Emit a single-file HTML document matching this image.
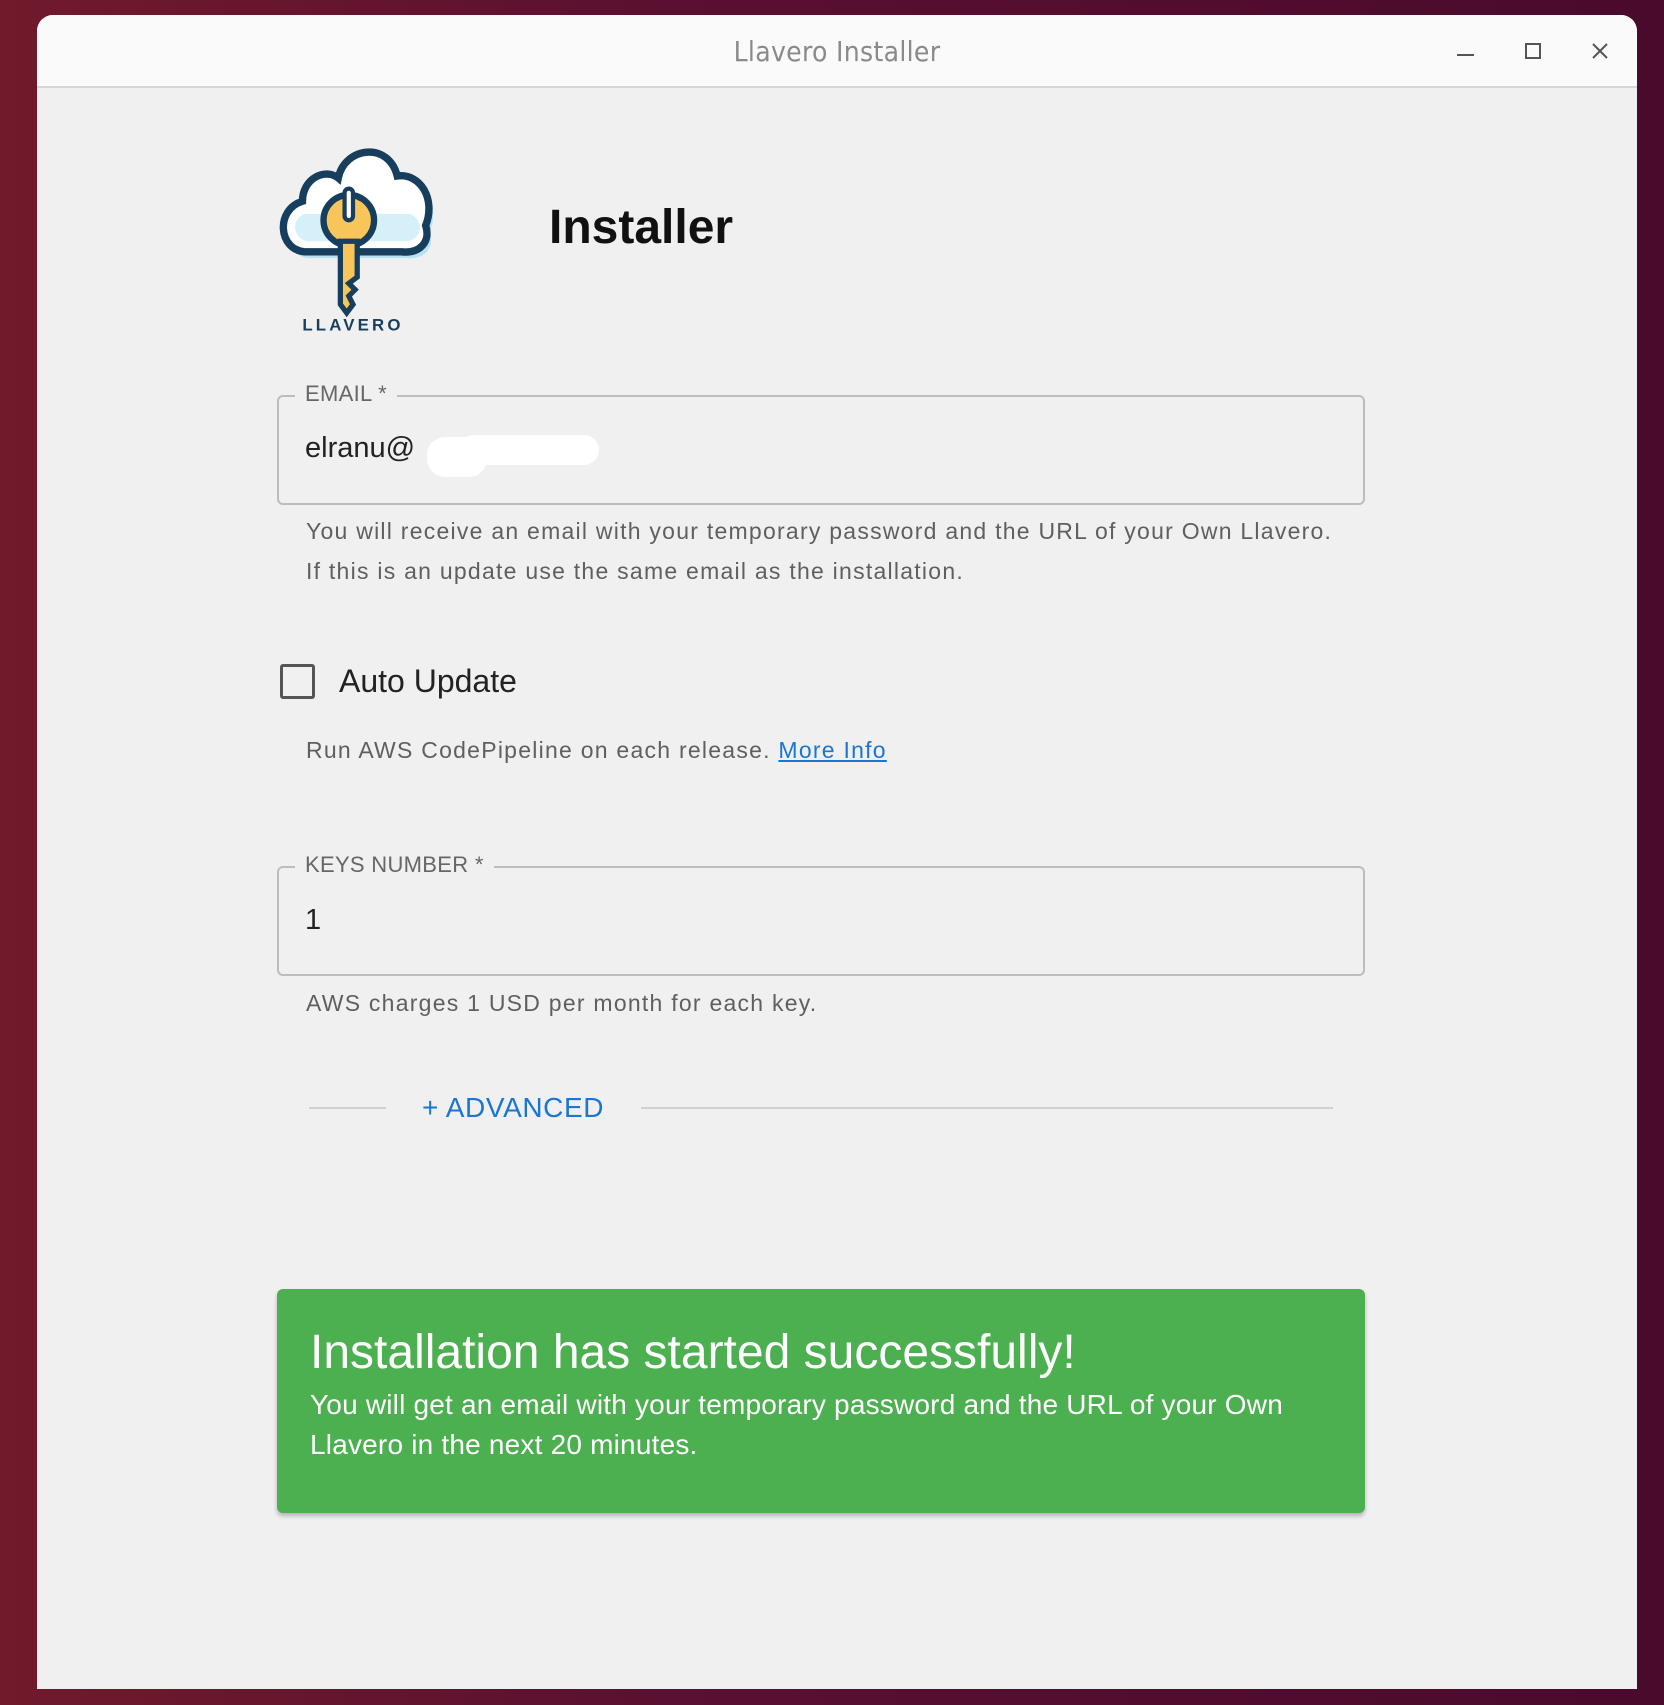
<!DOCTYPE html>
<html><head><meta charset="utf-8"><style>
*{margin:0;padding:0;box-sizing:border-box}
body{width:1664px;height:1705px;overflow:hidden;background:linear-gradient(90deg,#701a2c 0%,#5a1030 40%,#4a0a2c 100%);font-family:"Liberation Sans",sans-serif;position:relative}
.win{position:absolute;left:37px;top:15px;width:1600px;height:1674px;background:#f0f0f0;border-radius:16px 16px 0 0;overflow:hidden}
.tb{position:absolute;left:0;top:0;width:100%;height:73px;background:#fafafa;border-bottom:2px solid #d6d6d6}
.tb .t{position:absolute;left:0;right:0;top:20px;text-align:center;font-family:"DejaVu Sans Condensed","DejaVu Sans",sans-serif;font-size:28px;color:#8a8a8a;letter-spacing:0.3px}
.abs{position:absolute}
.field{position:absolute;left:240px;width:1088px;height:110px;border:2px solid #bdbdbd;border-radius:6px}
.lbl{position:absolute;left:16px;top:-16px;background:#f0f0f0;padding:0 10px;font-size:22px;color:#666;letter-spacing:0.3px}
.val{position:absolute;left:26px;font-size:29px;color:#222}
.help{position:absolute;left:269px;font-size:23px;color:#5f5f5f;letter-spacing:1.25px}
</style></head><body>
<div class="win">
<div class="tb"><div class="t">Llavero Installer</div>
<div class="abs" style="left:1420px;top:39px;width:17px;height:2px;background:#555"></div>
<div class="abs" style="left:1488px;top:28px;width:16px;height:16px;border:2px solid #555"></div>
<svg class="abs" style="left:1554px;top:27px" width="18" height="18" viewBox="0 0 18 18"><path d="M2 2L16 16M16 2L2 16" stroke="#555" stroke-width="2"/></svg>
</div>
<svg class="abs" style="left:236px;top:121px" width="160" height="200" viewBox="0 0 152 190">
<path d="M30 110 C5 108 2 70 28 62 C28 40 50 30 62 40 C68 10 110 5 118 38 C140 35 155 60 145 85 C150 100 140 112 122 110 Z" fill="#b8e2f2" transform="translate(4,6)"/>
<path d="M30 110 C5 108 2 70 28 62 C28 40 50 30 62 40 C68 10 110 5 118 38 C140 35 155 60 145 85 C150 100 140 112 122 110 Z" fill="#fff" stroke="#173e5c" stroke-width="7"/>
<path d="M35 100 C20 100 15 80 30 74 L130 74 C145 80 142 100 125 100 Z" fill="#d6f0fa"/>
<circle cx="72" cy="80" r="24" fill="#f8c55a" stroke="#173e5c" stroke-width="6"/>
<path d="M64 100 L64 160 L70 168 L76 160 L72 152 L78 146 L72 140 L80 134 L80 100 Z" fill="#f8c55a" stroke="#173e5c" stroke-width="5"/>
<rect x="68" y="50" width="8" height="30" rx="4" fill="#fff" stroke="#173e5c" stroke-width="4"/>
<text x="76" y="185" text-anchor="middle" font-family="Liberation Sans,sans-serif" font-weight="bold" font-size="16" letter-spacing="3" fill="#173e5c">LLAVERO</text>
</svg>
<div class="abs" style="left:512px;top:185px;font-size:48px;font-weight:bold;color:#111">Installer</div>
<div class="field" style="top:380px"><div class="lbl">EMAIL *</div><div class="val" style="top:35px">elranu@</div>
<div class="abs" style="left:148px;top:40px;width:60px;height:40px;background:#fff;border-radius:18px"></div>
<div class="abs" style="left:180px;top:38px;width:140px;height:30px;background:#fff;border-radius:15px"></div>
</div>
<div class="help" style="top:503px">You will receive an email with your temporary password and the URL of your Own Llavero.</div>
<div class="help" style="top:543px">If this is an update use the same email as the installation.</div>
<div class="abs" style="left:243px;top:649px;width:35px;height:35px;border:3px solid #555;border-radius:3px"></div>
<div class="abs" style="left:302px;top:648px;font-size:32px;color:#222">Auto Update</div>
<div class="help" style="top:722px">Run AWS CodePipeline on each release. <span style="color:#1976d2;text-decoration:underline">More Info</span></div>
<div class="field" style="top:851px"><div class="lbl">KEYS NUMBER *</div><div class="val" style="top:36px">1</div></div>
<div class="help" style="top:975px">AWS charges 1 USD per month for each key.</div>
<div class="abs" style="left:272px;top:1092px;width:77px;height:2px;background:#d0d0d0"></div>
<div class="abs" style="left:385px;top:1077px;font-size:28px;color:#1976d2;letter-spacing:0.6px">+ ADVANCED</div>
<div class="abs" style="left:604px;top:1092px;width:692px;height:2px;background:#d0d0d0"></div>
<div class="abs" style="left:240px;top:1274px;width:1088px;height:224px;background:#4caf50;border-radius:6px;box-shadow:0 3px 4px rgba(0,0,0,.25);color:#fff">
<div class="abs" style="left:33px;top:36px;font-size:48px">Installation has started successfully!</div>
<div class="abs" style="left:33px;top:96px;font-size:28px;line-height:40px;width:1020px;letter-spacing:0.2px">You will get an email with your temporary password and the URL of your Own Llavero in the next 20 minutes.</div>
</div>
</div>
</body></html>
